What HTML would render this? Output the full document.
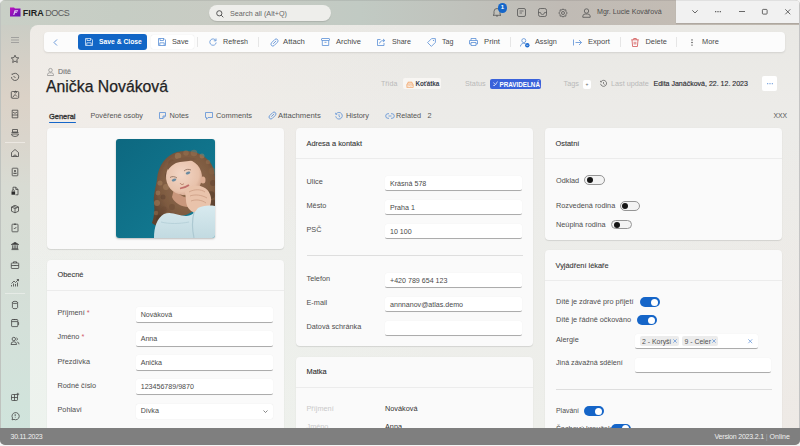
<!DOCTYPE html>
<html><head><meta charset="utf-8">
<style>
*{box-sizing:border-box;margin:0;padding:0}
html,body{width:800px;height:446px;overflow:hidden;background:#f4f4f4;font-family:"Liberation Sans",sans-serif;color:#4e4e4e}
.a{position:absolute}
#win{position:absolute;left:0;top:0;width:800px;height:444.6px;border-radius:5px;overflow:hidden;
 background:linear-gradient(90deg,#c9cfc6 0%,#c6cdc4 15%,#c8cbc3 28%,#c1cac3 45%,#c0c2bc 58%,#c0bbb5 70%,#c3bcb4 85%,#c2bab1 100%)}
#side{left:0;top:25px;width:30px;height:403px;background:linear-gradient(180deg,#cbcdc5 0%,#d3cfc6 8%,#dbd2c7 18%,#dad5cc 28%,#d8dbd3 40%,#d6ddd5 55%,#d4e0d9 75%,#d0e4dc 100%)}
#main{left:30px;top:25.4px;width:770px;height:403px;border-top-left-radius:8px;overflow:hidden;
 background:radial-gradient(ellipse 330px 200px at 8% 16%,rgba(242,237,232,.85),rgba(242,237,232,0)),radial-gradient(ellipse 420px 300px at 0% 100%,rgba(237,243,238,.95),rgba(237,243,238,0)),radial-gradient(ellipse 200px 300px at 100% 100%,rgba(238,232,228,.8),rgba(238,232,228,0)),linear-gradient(180deg,#e9e8e4 0%,#ecebe8 20%,#ecece9 40%,#eeefeb 100%)}
#status{left:0;top:427.7px;width:800px;height:17px;background:#7f7f7f;color:#f2f2f2;font-size:7.3px}
.card{position:absolute;background:#fafafa;border-radius:4px;box-shadow:0 1px 1px rgba(0,0,0,.10),0 0 2px rgba(0,0,0,.03)}
.ch{position:absolute;left:0;top:0;width:100%;height:31px;border-bottom:1px solid #ececec}
.ct{position:absolute;left:10.5px;top:10.6px;font-size:7.4px;line-height:9px;color:#363636;white-space:nowrap;-webkit-text-stroke:0.1px #363636}
.t{position:absolute;white-space:nowrap;font-size:7.3px;line-height:9px}
.inp{position:absolute;background:#fff;border-radius:2px;border-bottom:1px solid #acacac;box-shadow:0 0 1px rgba(0,0,0,.08)}
.inp span{position:absolute;left:5px;top:3.7px;font-size:7.1px;line-height:9px;color:#4a4a4a;white-space:nowrap}
.tb{position:absolute;top:0;height:20px;font-size:7.3px;line-height:20px;color:#4a4a4a;white-space:nowrap}
.sep{position:absolute;top:5px;width:1px;height:10px;background:#e6e6e6}
.tog{position:absolute;width:20.5px;height:9.5px;border-radius:5px;border:0.8px solid #959595;background:#f3f3f3}
.tog:after{content:"";position:absolute;left:1.6px;top:0.95px;width:6px;height:6px;border-radius:50%;background:#151515}
.ton{position:absolute;width:20px;height:10px;border-radius:5px;background:#1565c8}
.ton:after{content:"";position:absolute;right:2px;top:1.5px;width:7px;height:7px;border-radius:50%;background:#fff}
svg{position:absolute;overflow:visible}
</style></head><body>
<div id="win">
 <!-- title bar -->
 <svg style="left:9.5px;top:6.5px" width="11" height="10" viewBox="0 0 11 10">
  <defs><linearGradient id="lg" x1="0" y1="0" x2="1" y2="1"><stop offset="0" stop-color="#c012c0"/><stop offset="1" stop-color="#5a12b0"/></linearGradient></defs>
  <path d="M0 0.5 H4 L5 1.5 H10.5 V9.5 H0 Z" fill="url(#lg)"/>
  <path d="M4.5 3.3 H8.2 L7.8 4.4 H5.6 L5.3 5.2 H7.2 L6.9 6.1 H5 L4.3 8 H3.2 Z" fill="#e0c8f2"/>
 </svg>
 <div class="t" style="left:22.7px;top:7.5px;font-size:9px;line-height:10px;color:#1e1e1e;font-weight:bold">FIRA</div>
 <div class="t" style="left:45.3px;top:7.5px;font-size:9px;line-height:10px;color:#5a5a5a;letter-spacing:-0.55px">DOCS</div>

 <div class="a" style="left:209px;top:5px;width:122px;height:16px;border-radius:8px;background:#eeeeeb;box-shadow:0 1px 1px rgba(0,0,0,.12)"></div>
 <svg style="left:216px;top:9.5px" width="8" height="8" viewBox="0 0 8 8"><circle cx="3.3" cy="3.3" r="2.6" fill="none" stroke="#4a4a4a" stroke-width="0.9"/><path d="M5.2 5.2 L7.3 7.3" stroke="#4a4a4a" stroke-width="0.9"/></svg>
 <div class="t" style="left:230px;top:8.5px;color:#666;font-size:7.2px">Search all (Alt+Q)</div>

 <!-- top right icons -->
 <svg style="left:492px;top:7px" width="10" height="10" viewBox="0 0 10 10"><path d="M2 7.5 V4.5 A3 3 0 0 1 8 4.5 V7.5 L9 8.3 H1 Z M4 9 H6" fill="none" stroke="#555" stroke-width="0.8"/></svg>
 <div class="a" style="left:497.7px;top:3px;width:9.6px;height:9.6px;border-radius:50%;background:#1566c9;color:#fff;font-size:6px;line-height:9.6px;text-align:center;font-weight:bold">1</div>
 <svg style="left:516.5px;top:8px" width="9" height="9" viewBox="0 0 9 9"><rect x="0.5" y="0.5" width="8" height="8" rx="1.5" fill="none" stroke="#555" stroke-width="0.8"/><path d="M2.5 3 H6.5 M2.5 5 H5" stroke="#555" stroke-width="0.7"/></svg>
 <svg style="left:537.5px;top:8px" width="9" height="9" viewBox="0 0 9 9"><rect x="0.5" y="0.5" width="8" height="8" rx="1.8" fill="none" stroke="#555" stroke-width="0.8"/><path d="M0.5 4.5 H2.5 A2 2 0 0 0 6.5 4.5 H8.5" fill="none" stroke="#555" stroke-width="0.7"/></svg>
 <svg style="left:558px;top:7.5px" width="10" height="10" viewBox="0 0 10 10"><circle cx="5" cy="5" r="1.5" fill="none" stroke="#555" stroke-width="0.8"/><path d="M5 0.8 L6 2 L7.8 1.8 L8 3.5 L9.2 5 L8 6.5 L7.8 8.2 L6 8 L5 9.2 L4 8 L2.2 8.2 L2 6.5 L0.8 5 L2 3.5 L2.2 1.8 L4 2 Z" fill="none" stroke="#555" stroke-width="0.8" stroke-linejoin="round"/></svg>
 <svg style="left:582px;top:7.5px" width="9" height="10" viewBox="0 0 9 10"><circle cx="4.5" cy="3" r="2.2" fill="none" stroke="#555" stroke-width="0.8"/><path d="M0.8 9.3 V8 A2.5 2.5 0 0 1 3.3 6 H5.7 A2.5 2.5 0 0 1 8.2 8 V9.3 Z" fill="none" stroke="#555" stroke-width="0.8"/></svg>
 <div class="t" style="left:597px;top:8px;color:#4e4e4e;font-size:7.1px">Mgr. Lucie Kovářová</div>

 <!-- window controls -->
 <div class="a" style="left:676px;top:0;width:124px;height:23px;background:#f1f1f1;box-shadow:0 1px 1px rgba(0,0,0,.1)"></div>
 <div class="a" style="left:0;top:0;width:800px;height:1px;background:rgba(0,0,0,.07)"></div>
 <svg style="left:692px;top:10px" width="6" height="3.5" viewBox="0 0 6 3.5"><path d="M0.3 0.3 L3 3 L5.7 0.3" fill="none" stroke="#3a3a3a" stroke-width="0.75"/></svg>
 <svg style="left:715px;top:10.8px" width="6" height="1.4" viewBox="0 0 6 1.4"><circle cx="0.7" cy="0.7" r="0.65" fill="#3a3a3a"/><circle cx="3" cy="0.7" r="0.65" fill="#3a3a3a"/><circle cx="5.3" cy="0.7" r="0.65" fill="#3a3a3a"/></svg>
 <svg style="left:738.5px;top:11px" width="6" height="1" viewBox="0 0 6 1"><path d="M0 0.5 H6" stroke="#3a3a3a" stroke-width="0.75"/></svg>
 <svg style="left:762px;top:8.8px" width="5.5" height="5.5" viewBox="0 0 5.5 5.5"><rect x="0.4" y="0.4" width="4.7" height="4.7" rx="0.8" fill="none" stroke="#3a3a3a" stroke-width="0.75"/></svg>
 <svg style="left:785px;top:8.7px" width="5.6" height="5.6" viewBox="0 0 5.6 5.6"><path d="M0.3 0.3 L5.3 5.3 M5.3 0.3 L0.3 5.3" stroke="#3a3a3a" stroke-width="0.75"/></svg>

 <!-- sidebar -->
 <div id="side" class="a"></div>
 <svg style="left:10.0px;top:35.0px" width="10" height="10" viewBox="0 0 10 10"><path d="M1 2.5 H9 M1 5 H9 M1 7.5 H9" stroke="#8c8c8c" stroke-width="0.7"/></svg>
 <svg style="left:10.0px;top:53.5px" width="10" height="10" viewBox="0 0 10 10"><path d="M5 1.2 L6.1 3.6 L8.8 3.9 L6.8 5.7 L7.3 8.5 L5 7.1 L2.7 8.5 L3.2 5.7 L1.2 3.9 L3.9 3.6 Z" fill="none" stroke="#3d3d3d" stroke-width="0.75" stroke-linejoin="round"/></svg>
 <svg style="left:10.0px;top:71.5px" width="10" height="10" viewBox="0 0 10 10"><path d="M2.6 2.3 A3.6 3.6 0 1 1 1.5 5" fill="none" stroke="#3d3d3d" stroke-width="0.75"/><path d="M2.2 1.5 V3 M3.5 4 L5.5 6" fill="none" stroke="#3d3d3d" stroke-width="0.75"/></svg>
 <svg style="left:10.0px;top:90.3px" width="10" height="10" viewBox="0 0 10 10"><rect x="1.3" y="1.5" width="7.4" height="6.8" rx="1" fill="none" stroke="#3d3d3d" stroke-width="0.75"/><path d="M2.5 7.5 L5 4.5 L7 6.5 M5.5 3 A0.8 0.8 0 1 1 5.6 3" fill="none" stroke="#3d3d3d" stroke-width="0.75"/></svg>
 <svg style="left:10.0px;top:108.7px" width="10" height="10" viewBox="0 0 10 10"><path d="M2.2 1.2 H7.8 V8.8 H2.2 Z M2.2 6 H7.8 M3 3 C4 4.5 6 4.5 7 3" fill="none" stroke="#3d3d3d" stroke-width="0.75"/></svg>
 <svg style="left:10.0px;top:127.6px" width="10" height="10" viewBox="0 0 10 10"><path d="M2.5 1.5 H7.5 V4 H2.5 Z M1.5 6 A3.5 2.5 0 0 0 8.5 6 Z M1.5 4.5 H8.5" fill="none" stroke="#3d3d3d" stroke-width="0.75"/></svg>
 <div class="a" style="left:5px;top:141.5px;width:20px;height:1px;background:#ece8e2"></div>
 <svg style="left:10.0px;top:147.8px" width="10" height="10" viewBox="0 0 10 10"><path d="M1.5 8.5 V4.5 L5 1.5 L8.5 4.5 V8.5 Z M3.5 8.5 A1.5 1.5 0 0 1 6.5 8.5" fill="none" stroke="#3d3d3d" stroke-width="0.75"/></svg>
 <svg style="left:10.0px;top:166.5px" width="10" height="10" viewBox="0 0 10 10"><rect x="2.2" y="1.2" width="5.6" height="7.6" rx="0.6" fill="none" stroke="#3d3d3d" stroke-width="0.75"/><circle cx="5" cy="4" r="0.9" fill="#3d3d3d"/><path d="M3.4 6.3 H6.6" stroke="#3d3d3d" stroke-width="1"/></svg>
 <svg style="left:10.0px;top:186.1px" width="10" height="10" viewBox="0 0 10 10"><path d="M3 4 V1.2 H5.8 L8 3.5 V8.8 H5.5 M5.8 1.2 V3.5 H8" fill="none" stroke="#3d3d3d" stroke-width="0.75"/><rect x="1.5" y="5.5" width="3.6" height="3.2" fill="#2d2d2d"/><path d="M2.3 5.5 V4.7 A1 1 0 0 1 4.3 4.7 V5.5" fill="none" stroke="#3d3d3d" stroke-width="0.75"/></svg>
 <svg style="left:10.0px;top:204.2px" width="10" height="10" viewBox="0 0 10 10"><path d="M1.5 3 L5 1.3 L8.5 3 V7.2 L5 8.8 L1.5 7.2 Z M1.5 3 L5 4.6 L8.5 3 M5 4.6 V8.8 M3.2 2.1 L6.8 3.8" fill="none" stroke="#3d3d3d" stroke-width="0.75"/></svg>
 <svg style="left:10.0px;top:222.8px" width="10" height="10" viewBox="0 0 10 10"><rect x="2" y="1.2" width="6" height="7.6" rx="0.6" fill="none" stroke="#3d3d3d" stroke-width="0.75"/><path d="M3.8 5 L4.7 5.9 L6.3 4" fill="none" stroke="#3d3d3d" stroke-width="0.75"/><path d="M4 1.2 H6" stroke="#3d3d3d" stroke-width="1"/></svg>
 <svg style="left:10.0px;top:240.9px" width="10" height="10" viewBox="0 0 10 10"><path d="M1.2 3.6 L5 1.2 L8.8 3.6 Z" fill="#3d3d3d" stroke="#3d3d3d" stroke-width="0.6" stroke-linejoin="round"/><path d="M1.5 8.6 H8.5 M2.6 4.3 V7.6 M4.2 4.3 V7.6 M5.8 4.3 V7.6 M7.4 4.3 V7.6 M1.8 7.7 H8.2" stroke="#3d3d3d" stroke-width="0.75"/></svg>
 <svg style="left:10.0px;top:259.7px" width="10" height="10" viewBox="0 0 10 10"><rect x="1.3" y="3" width="7.4" height="5.5" rx="0.6" fill="none" stroke="#3d3d3d" stroke-width="0.75"/><path d="M3.5 3 V1.8 H6.5 V3 M1.3 5.5 H8.7 M5 5 V6" fill="none" stroke="#3d3d3d" stroke-width="0.75"/></svg>
 <svg style="left:10.0px;top:277.8px" width="10" height="10" viewBox="0 0 10 10"><path d="M1.5 8.5 V7 M3.5 8.5 V5.5 M5.5 8.5 V6 M7.5 8.5 V4.5 M1.5 5.5 L4 3 L5.5 4.5 L8.5 1.5 M6.8 1.5 H8.5 V3.2" fill="none" stroke="#3d3d3d" stroke-width="0.75"/></svg>
 <div class="a" style="left:5px;top:292.5px;width:20px;height:1px;background:#e6ebe6"></div>
 <svg style="left:10.0px;top:299.6px" width="10" height="10" viewBox="0 0 10 10"><ellipse cx="5" cy="2.4" rx="2.6" ry="1.1" fill="none" stroke="#3d3d3d" stroke-width="0.75"/><path d="M2.4 2.4 V7.6 A2.6 1.1 0 0 0 7.6 7.6 V2.4" fill="none" stroke="#3d3d3d" stroke-width="0.75"/></svg>
 <svg style="left:10.0px;top:317.7px" width="10" height="10" viewBox="0 0 10 10"><rect x="1.6" y="1.6" width="6.2" height="7" rx="0.6" fill="none" stroke="#3d3d3d" stroke-width="0.75"/><path d="M1.6 3.6 H7.8 M3 1 V2 M4.5 1 V2 M6 1 V2 M8 4.5 H8.6 V6.5 H8" fill="none" stroke="#3d3d3d" stroke-width="0.75"/></svg>
 <svg style="left:10.0px;top:335.7px" width="10" height="10" viewBox="0 0 10 10"><circle cx="3.8" cy="3" r="1.7" fill="none" stroke="#3d3d3d" stroke-width="0.75"/><path d="M1 8.5 A2.8 2.8 0 0 1 6.6 8.5 Z" fill="none" stroke="#3d3d3d" stroke-width="0.75"/><path d="M6.5 1.8 A1.4 1.4 0 0 1 6.5 4.4 M7.2 6 A2.2 2.2 0 0 1 9 8.3" fill="none" stroke="#3d3d3d" stroke-width="0.75"/></svg>
 <svg style="left:10.0px;top:391.7px" width="10" height="10" viewBox="0 0 10 10"><rect x="1.5" y="2.5" width="6" height="6" rx="0.8" fill="none" stroke="#3d3d3d" stroke-width="0.75"/><path d="M1.5 5.5 H7.5 M4.5 2.5 V8.5 M7.8 0.8 V3.5 M6.5 2.2 H9.2" fill="none" stroke="#3d3d3d" stroke-width="0.75"/></svg>
 <svg style="left:10.0px;top:410.5px" width="10" height="10" viewBox="0 0 10 10"><path d="M2 8.8 L2.5 7 A3.6 3.6 0 1 1 4 8.4 Z" fill="none" stroke="#3d3d3d" stroke-width="0.75" stroke-linejoin="round"/><path d="M5.2 3.2 V5.2" stroke="#3d3d3d" stroke-width="0.8"/><circle cx="5.2" cy="6.4" r="0.4" fill="#3d3d3d"/></svg>

 <!-- main -->
 <div id="main" class="a"></div>

 <!-- toolbar -->
 <div class="a" style="left:44px;top:32px;width:741px;height:20px;background:#fcfcfc;border-radius:4px;box-shadow:0 1px 2px rgba(0,0,0,.10)">
  <svg style="left:9px;top:6.5px" width="5" height="7" viewBox="0 0 5 7"><path d="M4 0.5 L1 3.5 L4 6.5" fill="none" stroke="#5b8fd6" stroke-width="0.9"/></svg>
  <div class="a" style="left:34px;top:2px;width:69px;height:16px;background:#1266c6;border-radius:3px"></div>
  <svg style="left:41px;top:6px" width="8" height="8" viewBox="0 0 8 8"><path d="M0.5 0.5 H6 L7.5 2 V7.5 H0.5 Z M2 0.5 V2.5 H5.5 V0.5 M1.8 7.5 V4.8 H6.2 V7.5" fill="none" stroke="#d8e6f8" stroke-width="0.8"/></svg>
  <div class="tb" style="left:55px;color:#fff;font-weight:bold;font-size:6.75px">Save &amp; Close</div>
  <div class="a" style="left:107px;top:3px;width:43px;height:14px;background:#fff;border-radius:2px;box-shadow:0 0 1px rgba(0,0,0,.15)"></div>
  <svg style="left:114px;top:6px" width="8" height="8" viewBox="0 0 8 8"><path d="M0.5 0.5 H6 L7.5 2 V7.5 H0.5 Z M2 0.5 V2.5 H5.5 V0.5 M1.8 7.5 V4.8 H6.2 V7.5" fill="none" stroke="#5b8fd6" stroke-width="0.8"/></svg>
  <div class="tb" style="left:128px">Save</div>
  <div class="sep" style="left:153px"></div>
  <svg style="left:165px;top:6px" width="8" height="8" viewBox="0 0 8 8"><path d="M6.8 2.5 A3.2 3.2 0 1 0 7.2 4.5" fill="none" stroke="#5b8fd6" stroke-width="0.8"/><path d="M7 0.5 V2.8 H4.8" fill="none" stroke="#5b8fd6" stroke-width="0.8"/></svg>
  <div class="tb" style="left:179px;font-size:7.15px">Refresh</div>
  <div class="sep" style="left:214px"></div>
  <svg style="left:225.5px;top:5.5px" width="9" height="9" viewBox="0 0 9 9"><g transform="rotate(45 4.5 4.5)"><rect x="2.6" y="0.3" width="3.8" height="8.4" rx="1.9" fill="none" stroke="#5b8fd6" stroke-width="0.8"/><path d="M4.5 2.2 V6.4" stroke="#5b8fd6" stroke-width="0.8"/></g></svg>
  <div class="tb" style="left:239px;font-size:7.7px">Attach</div>
  <svg style="left:277px;top:6px" width="9" height="8" viewBox="0 0 9 8"><rect x="0.5" y="0.5" width="8" height="2" rx="0.5" fill="none" stroke="#5b8fd6" stroke-width="0.8"/><path d="M1.3 2.5 V7.5 H7.7 V2.5 M3.5 4.3 H5.5" fill="none" stroke="#5b8fd6" stroke-width="0.8"/></svg>
  <div class="tb" style="left:292px;font-size:7.5px">Archive</div>
  <svg style="left:333px;top:6px" width="9" height="8" viewBox="0 0 9 8"><path d="M3.5 1.5 H0.5 V7.5 H7 V5" fill="none" stroke="#5b8fd6" stroke-width="0.8"/><path d="M2.5 5.5 C3 3 5 2.5 7.5 2.5 M6 1 L7.8 2.5 L6 4" fill="none" stroke="#5b8fd6" stroke-width="0.8"/></svg>
  <div class="tb" style="left:348px;font-size:7.1px">Share</div>
  <svg style="left:383px;top:5.5px" width="9" height="9" viewBox="0 0 9 9"><path d="M0.6 4.6 L4.6 0.6 H8.4 V4.4 L4.4 8.4 Z" fill="none" stroke="#5b8fd6" stroke-width="0.8"/><circle cx="6.5" cy="2.5" r="0.6" fill="#5b8fd6"/></svg>
  <div class="tb" style="left:398px;font-size:7.1px">Tag</div>
  <svg style="left:425px;top:6px" width="9" height="8" viewBox="0 0 9 8"><path d="M2 2.5 V0.5 H7 V2.5 M2 6 H0.5 V2.5 H8.5 V6 H7 M2 4.5 H7 V7.5 H2 Z" fill="none" stroke="#5b8fd6" stroke-width="0.8"/></svg>
  <div class="tb" style="left:440px;font-size:7.7px">Print</div>
  <div class="sep" style="left:466px"></div>
  <svg style="left:476px;top:5.5px" width="10" height="10" viewBox="0 0 10 10"><circle cx="3.8" cy="2.6" r="2" fill="none" stroke="#5b8fd6" stroke-width="0.8"/><path d="M0.5 8.5 A3.3 3 0 0 1 5.5 5.7" fill="none" stroke="#5b8fd6" stroke-width="0.8"/><circle cx="7.3" cy="7.3" r="2.2" fill="#1c6bd0"/><path d="M6.3 7.3 H8.3" stroke="#fff" stroke-width="0.6"/></svg>
  <div class="tb" style="left:491px;font-size:7.3px">Assign</div>
  <svg style="left:529px;top:6.5px" width="9" height="7" viewBox="0 0 9 7"><path d="M0.5 0.5 V6.5 M2.5 3.5 H8.5 M6 1 L8.5 3.5 L6 6" fill="none" stroke="#5b8fd6" stroke-width="0.8"/></svg>
  <div class="tb" style="left:544px;font-size:7.6px">Export</div>
  <div class="sep" style="left:576px"></div>
  <svg style="left:586.5px;top:5.5px" width="8" height="9" viewBox="0 0 8 9"><path d="M0.3 1.8 H7.7 M2.7 1.8 V0.5 H5.3 V1.8 M1 1.8 L1.6 8.5 H6.4 L7 1.8 M3.2 3.8 V6.5 M4.8 3.8 V6.5" fill="none" stroke="#d25454" stroke-width="0.8"/></svg>
  <div class="tb" style="left:601.5px;font-size:7.4px">Delete</div>
  <div class="sep" style="left:632px"></div>
  <svg style="left:647px;top:6.5px" width="2" height="7" viewBox="0 0 2 7"><circle cx="1" cy="0.9" r="0.7" fill="#333"/><circle cx="1" cy="3.5" r="0.7" fill="#333"/><circle cx="1" cy="6.1" r="0.7" fill="#333"/></svg>
  <div class="tb" style="left:658px;font-size:7.4px">More</div>
 </div>

 <!-- header -->
 <svg style="left:47px;top:68px" width="7" height="8" viewBox="0 0 7 8"><circle cx="3.5" cy="2.2" r="1.8" fill="none" stroke="#8a8a8a" stroke-width="0.7"/><path d="M0.5 7.5 V6.6 A2 2 0 0 1 2.5 4.8 H4.5 A2 2 0 0 1 6.5 6.6 V7.5 Z" fill="none" stroke="#8a8a8a" stroke-width="0.7"/></svg>
 <div class="t" style="left:58px;top:67.5px;color:#7c7c7c;font-size:7.1px;-webkit-text-stroke:0.2px #7c7c7c">Dítě</div>
 <div class="t" style="left:46px;top:77.5px;font-size:15.8px;line-height:18px;color:#1f1f24;-webkit-text-stroke:0.25px #1f1f24">Anička Nováková</div>

 <div class="t" style="left:381px;top:79px;color:#b9b9b9;font-size:7px">Třída</div>
 <div class="a" style="left:403px;top:78px;width:37.5px;height:11px;background:#f8f6f3;border-radius:2px"></div>
 <svg style="left:406px;top:79.5px" width="8" height="8" viewBox="0 0 8 8"><path d="M0.8 7.5 V4.2 H7.2 V7.5 Z M0.8 5.8 C2 6.6 3 5.2 4 5.8 C5 6.6 6 5.2 7.2 5.8 M1.6 4.2 V2.8 H6.4 V4.2 M2.4 2.8 V1.6 M4 2.8 V1.2 M5.6 2.8 V1.6" fill="none" stroke="#f29a55" stroke-width="0.6"/></svg>
 <div class="t" style="left:415.6px;top:79px;color:#3a3f4c;font-size:6.9px;letter-spacing:-0.12px;font-weight:bold;font-size:6.4px">Koťátka</div>

 <div class="t" style="left:465px;top:79px;color:#b9b9b9;font-size:7.25px">Status</div>
 <div class="a" style="left:490px;top:79px;width:51px;height:9.8px;background:#3a62da;border-radius:2px"></div>
 <svg style="left:493px;top:81px" width="5" height="5" viewBox="0 0 5 5"><path d="M0.5 1.5 L2.5 3.8 L4.5 0.5 M0.3 4.5 H2" fill="none" stroke="#fff" stroke-width="0.7"/></svg>
 <div class="t" style="left:499.5px;top:79.5px;color:#fff;font-size:6.3px;font-weight:bold">PRAVIDELNÁ</div>

 <div class="t" style="left:563.5px;top:79px;color:#b9b9b9;font-size:7.3px">Tags</div>
 <div class="a" style="left:583px;top:79.5px;width:8px;height:9px;background:#fff;border-radius:2px"></div>
 <div class="t" style="left:585.6px;top:79.5px;color:#666;font-size:5px;line-height:9px">+</div>
 <svg style="left:599.5px;top:80px" width="7" height="7" viewBox="0 0 7 7"><path d="M1.2 1.5 A3 3 0 1 1 0.6 3.8" fill="none" stroke="#555" stroke-width="0.7"/><path d="M0.6 0.8 V2 H1.8 M3.5 2 V3.6 L4.6 4.5" fill="none" stroke="#555" stroke-width="0.7"/></svg>
 <div class="t" style="left:611px;top:79px;color:#b9b9b9;font-size:7.25px">Last update</div>
 <div class="t" style="left:653.5px;top:79px;color:#2e2e33;font-size:7.03px;-webkit-text-stroke:0.15px #2e2e33">Edita Janáčková, 22. 12. 2023</div>
 <div class="a" style="left:762px;top:76px;width:15px;height:15px;background:#fff;border-radius:2px"></div>
 <svg style="left:766.5px;top:83px" width="6" height="1.5" viewBox="0 0 6 1.5"><circle cx="0.7" cy="0.7" r="0.6" fill="#5b8fd6"/><circle cx="3" cy="0.7" r="0.6" fill="#5b8fd6"/><circle cx="5.3" cy="0.7" r="0.6" fill="#5b8fd6"/></svg>


 <!-- cards col1 -->
 <div class="card" style="left:47px;top:128px;width:236.5px;height:121px">
  <div class="a" style="left:69px;top:11px;width:99px;height:99px;border-radius:3px;box-shadow:0 1px 2px rgba(0,0,0,.25)"></div>
  <svg style="left:69px;top:11px" width="99" height="99" viewBox="0 0 99 99">
   <defs>
    <linearGradient id="bg" x1="0" y1="0" x2="1" y2="1"><stop offset="0" stop-color="#0d6880"/><stop offset="0.5" stop-color="#10738b"/><stop offset="1" stop-color="#147e96"/></linearGradient>
    <clipPath id="cp"><rect x="0" y="0" width="99" height="99" rx="3"/></clipPath>
    <radialGradient id="hair" cx="0.55" cy="0.45" r="0.6"><stop offset="0" stop-color="#957052"/><stop offset="0.7" stop-color="#7d5a40"/><stop offset="1" stop-color="#5e432f"/></radialGradient>
    <radialGradient id="skin" cx="0.45" cy="0.4" r="0.65"><stop offset="0" stop-color="#f2d6c6"/><stop offset="0.75" stop-color="#e8c2ab"/><stop offset="1" stop-color="#cfa189"/></radialGradient>
    <linearGradient id="sw" x1="0" y1="0" x2="0" y2="1"><stop offset="0" stop-color="#d8eaef"/><stop offset="1" stop-color="#c2dae1"/></linearGradient>
    <filter id="bl" x="-20%" y="-20%" width="140%" height="140%"><feGaussianBlur stdDeviation="0.7"/></filter>
   </defs>
   <g clip-path="url(#cp)">
    <rect width="99" height="99" fill="url(#bg)"/>
    <g filter="url(#bl)">
    <path d="M41 40 C42 27 50 16 61 13 C73 10 86 13 94 23 C99 30 100 40 99 50 L99 72 L82 70 L70 76 C62 77 57 80 52 84 C47 88 40 88 36 84 C38 78 39 72 38 64 C37 56 40 48 41 40 Z" fill="url(#hair)"/>
    <circle cx="44" cy="44" r="2.6" fill="#a98360" opacity="0.5"/><circle cx="42" cy="54" r="2.4" fill="#a98360" opacity="0.5"/><circle cx="41" cy="64" r="3.0" fill="#a98360" opacity="0.5"/><circle cx="40" cy="74" r="2.3" fill="#9a7352" opacity="0.5"/><circle cx="44" cy="80" r="3.7" fill="#4e3526" opacity="0.5"/><circle cx="48" cy="70" r="2.6" fill="#6a4a34" opacity="0.5"/><circle cx="47" cy="58" r="2.5" fill="#5c402e" opacity="0.5"/><circle cx="50" cy="48" r="3.0" fill="#a98360" opacity="0.5"/><circle cx="52" cy="36" r="3.0" fill="#5c402e" opacity="0.5"/><circle cx="56" cy="24" r="3.6" fill="#6a4a34" opacity="0.5"/><circle cx="62" cy="17" r="3.2" fill="#a98360" opacity="0.5"/><circle cx="70" cy="14" r="2.8" fill="#9a7352" opacity="0.5"/><circle cx="78" cy="14" r="3.3" fill="#9a7352" opacity="0.5"/><circle cx="86" cy="17" r="2.5" fill="#a98360" opacity="0.5"/><circle cx="92" cy="23" r="2.3" fill="#9a7352" opacity="0.5"/><circle cx="96" cy="32" r="3.5" fill="#8a6446" opacity="0.5"/><circle cx="97" cy="44" r="3.0" fill="#5c402e" opacity="0.5"/><circle cx="95" cy="56" r="3.7" fill="#4e3526" opacity="0.5"/><circle cx="97" cy="64" r="3.3" fill="#4e3526" opacity="0.5"/><circle cx="52" cy="76" r="2.8" fill="#a98360" opacity="0.5"/><circle cx="56" cy="68" r="2.9" fill="#6a4a34" opacity="0.5"/><circle cx="90" cy="60" r="3.6" fill="#9a7352" opacity="0.5"/><circle cx="84" cy="66" r="2.3" fill="#4e3526" opacity="0.5"/>
    <path d="M58 50 C62 56 70 60 74 58 L72 68 C66 68 58 64 56 58 Z" fill="#c9977c"/>
    <ellipse cx="68" cy="38" rx="18" ry="18" transform="rotate(-18 68 38)" fill="url(#skin)"/>
    <ellipse cx="87" cy="41" rx="2.5" ry="3.5" fill="#dcae94"/>
    <path d="M51 27 C57 19 70 16 81 20 C76 22 70 22 64 23 C58 24 55 27 52 31 Z" fill="#7a5840"/>
    <path d="M54 38.5 C56 37 59 37.5 61 39" fill="none" stroke="#8a6a58" stroke-width="0.8"/>
    <path d="M68 32 C70 30 73 30 75 31" fill="none" stroke="#8a6a58" stroke-width="0.8"/>
    <ellipse cx="58" cy="41" rx="2.4" ry="1.3" transform="rotate(-20 58 41)" fill="#6a8aa0"/>
    <ellipse cx="72" cy="34" rx="2.4" ry="1.3" transform="rotate(-20 72 34)" fill="#6a8aa0"/>
    <path d="M64 44 C65 46 67 46 68 44.5" fill="none" stroke="#b8866e" stroke-width="0.9"/>
    <path d="M64 49.5 C67 49 71 47.5 73 46" fill="none" stroke="#c06e6a" stroke-width="1.7"/>
    <path d="M69 53 C71 47 80 45 87 48 C94 51 97 59 94 67 C92 74 85 76 79 74 C73 72 70 67 70 61 Z" fill="#e9c3ab"/>
    <path d="M73 53 C78 50 85 50 89 53 M74 57 C79 55 86 56 91 59 M75 62 C80 60 86 61 90 64" fill="none" stroke="#cc9d84" stroke-width="0.8"/>
    <path d="M38 99 C38 88 41 79 48 75 C56 72 62 77 70 77 C76 77 79 73 82 69 C86 67 92 66 99 67 V99 Z" fill="url(#sw)"/>
    <path d="M78 73 C76 81 76 90 78 99" fill="none" stroke="#adc9d2" stroke-width="1.2"/>
    <path d="M45 83 C53 85 63 85 73 83" fill="none" stroke="#b8d2da" stroke-width="1"/>
    </g>
   </g>
  </svg>
 </div>
 <div class="card" style="left:47px;top:260px;width:236.5px;height:200px">
  <div class="ch"></div><div class="ct" style="top:9.8px">Obecné</div>
  <div class="t" style="left:10.5px;top:48.3px">Příjmení <span style="color:#d05a6a">*</span></div>
  <div class="inp" style="left:88.7px;top:47px;width:137.3px;height:15.5px"><span>Nováková</span></div>
  <div class="t" style="left:10.5px;top:72.4px">Jméno <span style="color:#d05a6a">*</span></div>
  <div class="inp" style="left:88.7px;top:71px;width:137.3px;height:15.5px"><span>Anna</span></div>
  <div class="t" style="left:10.5px;top:96.6px">Přezdívka</div>
  <div class="inp" style="left:88.7px;top:95px;width:137.3px;height:15.5px"><span>Anička</span></div>
  <div class="t" style="left:10.5px;top:120.7px">Rodné číslo</div>
  <div class="inp" style="left:88.7px;top:119px;width:137.3px;height:15.5px"><span>123456789/9870</span></div>
  <div class="t" style="left:10.5px;top:145px">Pohlaví</div>
  <div class="inp" style="left:88.7px;top:143.7px;width:137.3px;height:15px;border-bottom:none;box-shadow:0 0 1px rgba(0,0,0,.12)"><span>Dívka</span></div>
  <svg style="left:216px;top:149.5px" width="5" height="3" viewBox="0 0 5 3"><path d="M0.5 0.5 L2.5 2.5 L4.5 0.5" fill="none" stroke="#555" stroke-width="0.7"/></svg>
 </div>

 <!-- col2 -->
 <div class="card" style="left:296px;top:128px;width:236.5px;height:218px">
  <div class="ch"></div><div class="ct">Adresa a kontakt</div>
  <div class="t" style="left:10.5px;top:49px">Ulice</div>
  <div class="inp" style="left:89px;top:48px;width:137px;height:14.8px"><span>Krásná 578</span></div>
  <div class="t" style="left:10.5px;top:73px">Město</div>
  <div class="inp" style="left:89px;top:72px;width:137px;height:14.8px"><span>Praha 1</span></div>
  <div class="t" style="left:10.5px;top:97px">PSČ</div>
  <div class="inp" style="left:89px;top:96px;width:137px;height:14.8px"><span>10 100</span></div>
  <div class="a" style="left:10.5px;top:127px;width:216px;height:1px;background:#dedede"></div>
  <div class="t" style="left:10.5px;top:145.5px">Telefon</div>
  <div class="inp" style="left:89px;top:145px;width:137px;height:14.8px"><span>+420 789 654 123</span></div>
  <div class="t" style="left:10.5px;top:169.5px">E-mail</div>
  <div class="inp" style="left:89px;top:169px;width:137px;height:14.8px"><span>annnanov@atlas.demo</span></div>
  <div class="t" style="left:10.5px;top:193.5px">Datová schránka</div>
  <div class="inp" style="left:89px;top:193px;width:137px;height:14.8px"><span></span></div>
 </div>
 <div class="card" style="left:296px;top:357px;width:236.5px;height:120px">
  <div class="ch"></div><div class="ct" style="color:#2a2a2a;top:10px">Matka</div>
  <div class="t" style="left:10.5px;top:46.5px;color:#c9c9c9">Příjmení</div>
  <div class="t" style="left:89px;top:46.5px;color:#333">Nováková</div>
  <div class="t" style="left:10.5px;top:65px;color:#c9c9c9">Jméno</div>
  <div class="t" style="left:89px;top:65px;color:#333">Anna</div>
 </div>

 <!-- col3 -->
 <div class="card" style="left:545px;top:128px;width:237px;height:111.5px">
  <div class="ch"></div><div class="ct">Ostatní</div>
  <div class="t" style="left:11px;top:47.5px">Odklad</div>
  <div class="tog" style="left:39px;top:47.2px"></div>
  <div class="t" style="left:11px;top:73px">Rozvedená rodina</div>
  <div class="tog" style="left:74.5px;top:73px"></div>
  <div class="t" style="left:11px;top:92px">Neúplná rodina</div>
  <div class="tog" style="left:66px;top:91.6px"></div>
 </div>
 <div class="card" style="left:545px;top:250px;width:237px;height:220px">
  <div class="ch" style="height:30.5px"></div><div class="ct" style="top:10.5px">Vyjádření lékaře</div>
  <div class="t" style="left:11px;top:46.7px">Dítě je zdravé pro přijetí</div>
  <div class="ton" style="left:94.8px;top:47px"></div>
  <div class="t" style="left:11px;top:64.7px">Dítě je řádně očkováno</div>
  <div class="ton" style="left:91.5px;top:65px"></div>
  <div class="t" style="left:11px;top:84.8px">Alergie</div>
  <div class="inp" style="left:89.6px;top:84px;width:123.8px;height:15.3px"></div>
  <div class="a" style="left:95px;top:86px;width:39px;height:9.6px;background:#ececec;border-radius:2px"></div>
  <div class="t" style="left:97px;top:86.5px;font-size:6.9px;color:#505050">2 - Koryši</div>
  <svg style="left:127.5px;top:89px" width="4" height="4" viewBox="0 0 4 4"><path d="M0.3 0.3 L3.7 3.7 M3.7 0.3 L0.3 3.7" stroke="#5b8fd6" stroke-width="0.7"/></svg>
  <div class="a" style="left:137px;top:86px;width:36.4px;height:9.6px;background:#ececec;border-radius:2px"></div>
  <div class="t" style="left:139.5px;top:86.5px;font-size:6.9px;color:#505050">9 - Celer</div>
  <svg style="left:166.5px;top:89px" width="4" height="4" viewBox="0 0 4 4"><path d="M0.3 0.3 L3.7 3.7 M3.7 0.3 L0.3 3.7" stroke="#5b8fd6" stroke-width="0.7"/></svg>
  <svg style="left:203px;top:88.5px" width="4.5" height="4.5" viewBox="0 0 4.5 4.5"><path d="M0.3 0.3 L4.2 4.2 M4.2 0.3 L0.3 4.2" stroke="#5b8fd6" stroke-width="0.7"/></svg>
  <div class="t" style="left:11px;top:108.8px;font-size:7.15px">Jiná závažná sdělení</div>
  <div class="inp" style="left:89.6px;top:108px;width:136.4px;height:15.3px"></div>
  <div class="a" style="left:10.7px;top:139px;width:216.3px;height:1px;background:#dedede"></div>
  <div class="t" style="left:11px;top:156px;font-size:6.9px">Plavání</div>
  <div class="ton" style="left:39.4px;top:156px"></div>
  <div class="t" style="left:11px;top:174px">Šachový kroužek</div>
  <div class="ton" style="left:65.6px;top:173.7px"></div>
 </div>

 <!-- tabs -->
 <div class="t" style="left:49px;top:112px;color:#383838;font-size:7.45px;-webkit-text-stroke:0.35px #383838">General</div>
 <div class="a" style="left:49px;top:121.5px;width:27px;height:1.6px;background:#1566c9;border-radius:1px"></div>
 <div class="t" style="left:90.5px;top:111px;color:#555;font-size:7.25px">Pověřené osoby</div>
 <svg style="left:159px;top:112px" width="7" height="7" viewBox="0 0 7 7"><path d="M0.5 0.5 H6.5 V4 L4 6.5 H0.5 Z M4 6.5 V4 H6.5" fill="none" stroke="#5b8fd6" stroke-width="0.8"/></svg>
 <div class="t" style="left:169.5px;top:111px;color:#555;font-size:7.4px">Notes</div>
 <svg style="left:205px;top:111.5px" width="8" height="8" viewBox="0 0 8 8"><path d="M0.5 0.5 H7.5 V5.5 H3 L1.5 7.3 V5.5 H0.5 Z" fill="none" stroke="#5b8fd6" stroke-width="0.8"/></svg>
 <div class="t" style="left:216px;top:111px;color:#555;font-size:7.45px">Comments</div>
 <svg style="left:267.5px;top:111px" width="9" height="9" viewBox="0 0 9 9"><g transform="rotate(45 4.5 4.5)"><rect x="2.6" y="0.4" width="3.8" height="8.2" rx="1.9" fill="none" stroke="#5b8fd6" stroke-width="0.8"/><path d="M4.5 2.2 V6.2" stroke="#5b8fd6" stroke-width="0.8"/></g></svg>
 <div class="t" style="left:278px;top:111px;color:#555;font-size:7.7px">Attachments</div>
 <svg style="left:335px;top:111.5px" width="8" height="8" viewBox="0 0 8 8"><path d="M1.3 1.8 A3.3 3.3 0 1 1 0.7 4.3" fill="none" stroke="#5b8fd6" stroke-width="0.8"/><path d="M0.7 0.8 V2.3 H2.2 M4 2.3 V4.2 L5.2 5.2" fill="none" stroke="#5b8fd6" stroke-width="0.8"/></svg>
 <div class="t" style="left:346px;top:111px;color:#555;font-size:7.4px">History</div>
 <svg style="left:386px;top:112.5px" width="8" height="6" viewBox="0 0 8 6"><path d="M3 0.7 H2 A2.3 2.3 0 0 0 2 5.3 H3 M5 0.7 H6 A2.3 2.3 0 0 1 6 5.3 H5 M2.5 3 H5.5" fill="none" stroke="#5b8fd6" stroke-width="0.8"/></svg>
 <div class="t" style="left:396px;top:111px;color:#555;font-size:7.25px">Related</div>
 <div class="t" style="left:427.5px;top:111px;color:#555;font-size:7.25px">2</div>
 <div class="t" style="left:773.5px;top:111px;color:#555;font-size:6.8px">XXX</div>

 <div class="a" style="left:0;top:0;width:1px;height:444.6px;background:#bfc3bf"></div>
 <div class="a" style="left:799px;top:0;width:1px;height:444.6px;background:#c4c4c4"></div>
 <!-- status -->
 <div id="status" class="a">
  <div class="t" style="left:10.5px;top:4.7px;color:#f0f0f0;font-size:7px;letter-spacing:-0.25px">30.11.2023</div>
  <div class="t" style="left:714.5px;top:4.7px;color:#f0f0f0;font-size:7px"><span style="letter-spacing:-0.2px">Version 2023.2.1</span> <span style="color:#a8a8a8">|</span> Online</div>
 </div>
</div>
</body></html>
